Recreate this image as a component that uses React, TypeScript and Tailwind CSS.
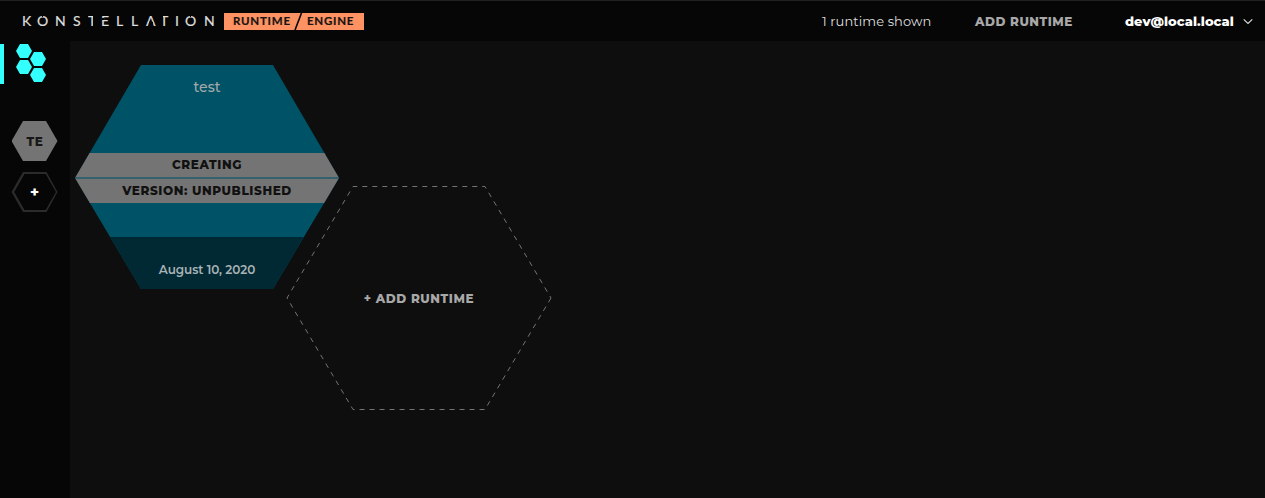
import React from "react";

const LETTERS: { ch: string; cls: string; cut?: string }[] = [
  { ch: "K", cls: "w-[15px]" },
  { ch: "O", cls: "w-[18px]", cut: "left-[5px] top-[1px] h-[3px] w-[1px]" },
  { ch: "N", cls: "w-[18px]" },
  { ch: "S", cls: "w-[15px]" },
  { ch: "T", cls: "w-[13px] [clip-path:inset(0_8px_0_0)]" },
  { ch: "E", cls: "w-[15px]", cut: "left-[1px] top-[5px] h-[2px] w-[2px]" },
  { ch: "L", cls: "w-[15px]" },
  { ch: "L", cls: "w-[15px]" },
  { ch: "A", cls: "w-[14px]", cut: "left-[3px] top-[9px] h-[3px] w-[4px]" },
  { ch: "T", cls: "w-[15px] [clip-path:inset(0_0_0_3px)]" },
  { ch: "I", cls: "w-[10px]" },
  { ch: "O", cls: "w-[19px]", cut: "left-[5px] top-[1px] h-[3px] w-[1px]" },
  { ch: "N", cls: "w-[12px]" },
];

function Wordmark() {
  return (
    <div className="ml-[22px] flex h-[16px] w-[202px] font-['Lato',sans-serif] text-[14px] leading-[16px] text-[#dedede] [-webkit-text-stroke:0.2px_#dedede]">
      {LETTERS.map((l, i) => (
        <span key={i} className={`relative block shrink-0 ${l.cls}`}>
          {l.ch}
          {l.cut && <i className={`absolute bg-[#060606] ${l.cut}`} />}
        </span>
      ))}
    </div>
  );
}

function Header() {
  return (
    <header className="flex h-[41px] shrink-0 items-center border-t border-[#202020] bg-[#060606]">
      <Wordmark />
      <div className="flex h-[17px] w-[140px] items-start bg-[#ff9262] font-['Lato',sans-serif] text-[11.5px] font-bold leading-[16px] text-[#171310] [-webkit-text-stroke:0.2px_#171310]">
        <span className="ml-[9px] w-[61px] whitespace-nowrap tracking-[0.75px]">RUNTIME</span>
        <svg className="h-[17px] w-[9px]" viewBox="0 0 9 17"><path d="M1 17 7.5 0" stroke="#060606" strokeWidth="1.6" /></svg>
        <span className="ml-[4px] whitespace-nowrap tracking-[0.75px]">ENGINE</span>
      </div>
      <div className="ml-[458px] w-[153px] whitespace-nowrap pt-[2px] text-[13px] tracking-[0.1px] text-[#dedede]">1 runtime shown</div>
      <div className="w-[150px] whitespace-nowrap pt-[2px] text-[12px] font-extrabold tracking-[0.55px] text-[#a8a8a8]">ADD RUNTIME</div>
      <div className="w-[117px] whitespace-nowrap pt-[2px] text-[13px] font-extrabold tracking-[0.05px] text-white">dev@local.local</div>
      <svg className="h-[7px] w-[12px]" viewBox="0 0 12 7" fill="none"><path d="m1.7 1.300 4.300 4.200 4.300-4.200" stroke="#ddd" strokeWidth="1.1" /></svg>
    </header>
  );
}

function Sidebar() {
  return (
    <nav className="flex w-[70px] shrink-0 flex-col bg-[#060606]">
      <div className="mt-[3px] flex h-[40px] w-[70px] border-l-4 border-[#33ffff]">
        <svg className="ml-[12px] h-[40px] w-[32px]" viewBox="0 0 32 40" fill="#33ffff">
          <path d="M4 0h8l4 7-4 7H4L0 7zM18 8h8l4 7-4 7h-8l-4-7zM4 16h8l4 7-4 7H4l-4-7zM18 24h8l4 7-4 7h-8l-4-7z" />
        </svg>
      </div>
      <div className="ml-[11.500px] mt-[37px] flex h-[40px] w-[46px] items-center justify-center bg-[#747474] pl-[1px] pt-[1px] text-[12px] font-extrabold tracking-[0.6px] text-[#171717] [clip-path:polygon(25%_0,75%_0,100%_50%,75%_100%,25%_100%,0_50%)]">TE</div>
      <div className="ml-[11px] mt-[11px] grid h-[40px] w-[47px] place-items-center">
        <svg className="col-start-1 row-start-1 h-[40px] w-[47px]" viewBox="0 0 47 40">
          <path fillRule="evenodd" fill="#2b2b2b" d="M12 0h23.500l11 20-11 20H12L.5 20zM13.500 2 3.200 20l10.300 18h21.200l10.300-18-10.300-18z" />
        </svg>
        <span className="col-start-1 row-start-1 pt-[1px] text-[15px] font-extrabold text-white">+</span>
      </div>
    </nav>
  );
}

function RuntimeCard() {
  return (
    <article className="ml-[5px] mt-[24px] flex h-[224px] w-[264px] shrink-0 flex-col items-stretch bg-[#005367] text-center [clip-path:polygon(25%_0,75%_0,100%_50.4%,75%_100%,25%_100%,0_50.4%)]">
      <div className="h-[88px] pt-[12px] text-[14px] font-medium leading-[20px] text-[#a3a9aa]">test</div>
      <div className="h-[24px] bg-[#747474] text-[12px] font-extrabold leading-[23px] tracking-[0.6px] text-[#111]">CREATING</div>
      <div className="h-[2px] bg-[#34616c]" />
      <div className="h-[24px] bg-[#747474] text-[12px] font-extrabold leading-[23px] tracking-[0.6px] text-[#111]">VERSION: UNPUBLISHED</div>
      <div className="h-[34px]" />
      <div className="h-[52px] bg-[#002933] pt-[23px] text-[12px] font-semibold leading-[20px] tracking-[-0.04px] text-[#a9b2b5]">August 10, 2020</div>
    </article>
  );
}

function AddRuntimeCard() {
  return (
    <button className="-ml-[53px] mt-[144px] grid h-[226px] w-[266px] shrink-0 place-items-center">
      <svg className="col-start-1 row-start-1 h-[226px] w-[266px]" viewBox="0 0 266 226" fill="none">
        <path d="M265 113 199 224.500H67L1 113 67 1.500h132z" stroke="#747474" strokeDasharray="5 5" />
      </svg>
      <span className="col-start-1 row-start-1 pt-[2px] text-[12px] font-extrabold tracking-[0.58px] text-[#a8a8a8]">+ ADD RUNTIME</span>
    </button>
  );
}

export default function App() {
  return (
    <div className="flex h-[498px] w-[1265px] flex-col overflow-hidden bg-[#0e0e0e] font-['Montserrat','Inter',sans-serif]">
      <Header />
      <div className="flex min-h-0 flex-1">
        <Sidebar />
        <main className="flex flex-1 items-start">
          <RuntimeCard />
          <AddRuntimeCard />
        </main>
      </div>
    </div>
  );
}
